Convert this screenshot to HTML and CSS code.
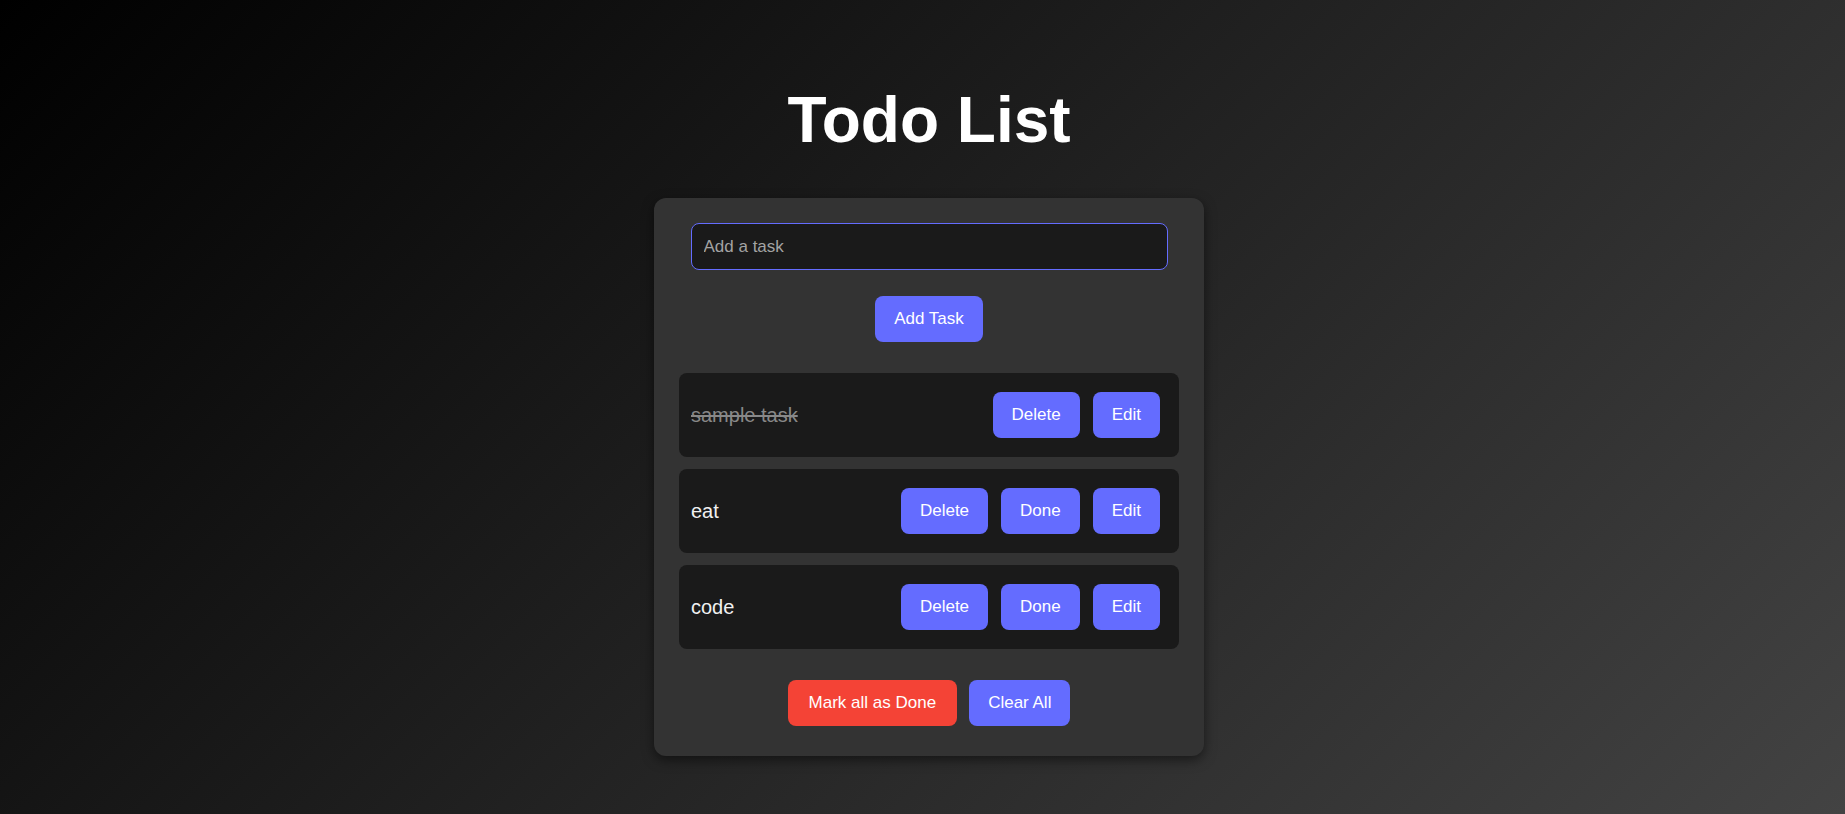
FILE: index.html
```html
<!DOCTYPE html>
<html lang="en">
<head>
<meta charset="utf-8">
<title>Todo List</title>
<link rel="stylesheet" href="styles.css">
</head>
<body>
<main class="page">
  <h1 class="title">Todo List</h1>
  <section class="card">
    <input class="task-input" type="text" placeholder="Add a task">
    <button class="btn add-btn">Add Task</button>
    <ul class="task-list">
      <li class="task">
        <span class="task-text done">sample task</span>
        <div class="task-actions">
          <button class="btn">Delete</button>
          <button class="btn">Edit</button>
        </div>
      </li>
      <li class="task">
        <span class="task-text">eat</span>
        <div class="task-actions">
          <button class="btn">Delete</button>
          <button class="btn">Done</button>
          <button class="btn">Edit</button>
        </div>
      </li>
      <li class="task">
        <span class="task-text">code</span>
        <div class="task-actions">
          <button class="btn">Delete</button>
          <button class="btn">Done</button>
          <button class="btn">Edit</button>
        </div>
      </li>
    </ul>
    <div class="footer-actions">
      <button class="btn btn-red">Mark all as Done</button>
      <button class="btn">Clear All</button>
    </div>
  </section>
</main>
</body>
</html>
```

FILE: styles.css
```css
* {
  box-sizing: border-box;
}

html, body {
  margin: 0;
  min-height: 100vh;
}

body {
  background: linear-gradient(135deg, #000000 0%, #434343 100%);
  font-family: "Liberation Sans", Arial, sans-serif;
  color: #ffffff;
}

.page {
  display: flex;
  flex-direction: column;
  align-items: center;
  padding: 83px 0 0 13px;
}

.title {
  margin: 0 0 41px;
  font-size: 64px;
  font-weight: bold;
  line-height: 74px;
  color: #ffffff;
}

.card {
  width: 550px;
  background: #333333;
  border-radius: 12px;
  padding: 25px 25px 30px;
  box-shadow: 0 4px 12px rgba(0, 0, 0, 0.5);
  display: flex;
  flex-direction: column;
  align-items: center;
}

.task-input {
  width: 477px;
  height: 47px;
  padding: 0 12px;
  background: #1a1a1a;
  border: 1px solid #646cff;
  border-radius: 8px;
  color: #f1f1f1;
  font-family: "Liberation Sans", Arial, sans-serif;
  font-size: 17px;
  outline: none;
}

.task-input::placeholder {
  color: #a3a3a3;
}

.btn {
  height: 46px;
  padding: 0 19px;
  border: none;
  border-radius: 8px;
  background: #646cff;
  color: #ffffff;
  font-family: "Liberation Sans", Arial, sans-serif;
  font-size: 17px;
  cursor: pointer;
}

.btn-red {
  background: #f44336;
  padding: 0 21px;
}

.add-btn {
  margin-top: 26px;
  padding: 0 19.5px;
}

.task-list {
  list-style: none;
  margin: 31px 0 0;
  padding: 0;
  width: 500px;
  display: flex;
  flex-direction: column;
  gap: 12px;
}

.task {
  height: 84px;
  display: flex;
  align-items: center;
  justify-content: space-between;
  padding: 0 19px 0 12px;
  background: #1a1a1a;
  border-radius: 8px;
}

.task-text {
  font-size: 20px;
  color: #f1f1f1;
}

.task-text.done {
  color: #888888;
  text-decoration: line-through;
}

.task-actions {
  display: flex;
  gap: 13px;
}

.footer-actions {
  margin-top: 31px;
  display: flex;
  gap: 12px;
}
```
